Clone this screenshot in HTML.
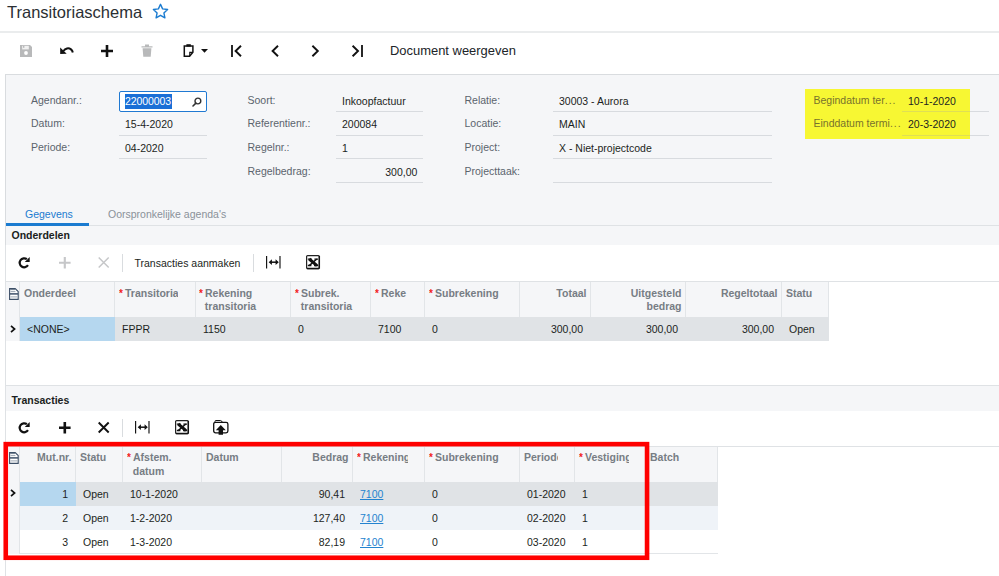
<!DOCTYPE html>
<html><head><meta charset="utf-8">
<style>
*{box-sizing:border-box;margin:0;padding:0}
html,body{width:999px;height:576px;overflow:hidden;background:#fff}
body{font-family:"Liberation Sans",sans-serif;font-size:10.5px;color:#1f2327;position:relative}
.a{position:absolute;white-space:nowrap}
.title{left:7px;top:0.9px;font-size:16.5px;color:#2b2f33;line-height:22px}
.lbl{color:#5b646d;line-height:14px}
.val{color:#1c1f22;line-height:14px}
.ul{height:1px;background:#d8dbdf}
.panel{background:#f5f6f8}
.gh{background:#f5f6f8;color:#777d84;font-weight:bold;line-height:13px;border-right:1px solid #e2e5e8;padding:5px 0 0 4px}
.gh span{display:block;overflow:hidden;height:28px}
.gh.r{text-align:right;padding-right:3.5px}
.gh i{color:#f21d1d;font-style:normal;font-weight:bold;font-size:10px;display:inline-block;width:6px}
.gc{line-height:22px;height:24px;overflow:hidden;padding-left:7px;color:#1c1f22}
.gc.r{text-align:right;padding-right:8px;padding-left:0}
.sec{font-weight:bold;color:#1b1e21;line-height:14px}
.tb{color:#1c1f22}
svg{position:absolute;overflow:visible}
</style></head><body>

<div class="a title">Transitoriaschema</div>
<svg style="left:152px;top:2.5px" width="17" height="16" viewBox="0 0 17 16"><path d="M8.5 1.3l2.1 4.6 5 .6-3.7 3.4 1 4.9-4.4-2.5-4.4 2.5 1-4.9L1.4 6.5l5-.6z" fill="none" stroke="#1a7bd0" stroke-width="1.4" stroke-linejoin="round"/></svg>
<div class="a" style="left:0;top:31px;width:999px;height:2px;background:#eaeced"></div>
<div class="a tb" style="left:390px;top:43px;font-size:12.95px;line-height:16px;color:#202428">Document weergeven</div>
<svg style="left:20px;top:45px" width="12" height="12" viewBox="0 0 12 12"><path d="M0 0h10l2 2v10h-12z" fill="#b8b9ba"/><rect x="2.2" y="0.8" width="6.6" height="3.6" fill="#fff" opacity=".8"/><rect x="3" y="0.8" width="1.4" height="2" fill="#b8b9ba"/><circle cx="6" cy="8" r="1.9" fill="#fff"/></svg>
<svg style="left:59px;top:45px" width="15" height="11" viewBox="0 0 15 11"><path d="M4.4 6C6.4 3.2 9.6 2.6 11.7 4.1c1.2 0.9 1.9 2 2.1 3.4" fill="none" stroke="#111" stroke-width="2"/><path d="M1.2 2.5V9l6.5-0.3z" fill="#111"/></svg>
<svg style="left:101px;top:45px" width="12" height="12" viewBox="0 0 12 12"><path d="M6 0v12M0 6h12" stroke="#111" stroke-width="2.6"/></svg>
<svg style="left:141px;top:44px" width="12" height="13" viewBox="0 0 12 13"><path d="M0.5 2.2h11v1.3h-11zM4 0.6h4v1.6h-4zM1.6 4.2h8.8l-0.7 8.6h-7.4z" fill="#b8b9ba"/></svg>
<svg style="left:182.5px;top:43px" width="12" height="14" viewBox="0 0 12 14"><path d="M1.3 3h8.6v6.2l-3.3 4.1H1.3z" fill="none" stroke="#111" stroke-width="1.5"/><path d="M3.4 1.2h4.4v2.4H3.4z" fill="#111"/><path d="M6.8 13V9.4h3" fill="none" stroke="#111" stroke-width="1.2"/></svg>
<svg style="left:201px;top:49px" width="7" height="4" viewBox="0 0 7 4"><path d="M0 0h7L3.5 3.8z" fill="#111"/></svg>
<svg style="left:231px;top:45px" width="11" height="12" viewBox="0 0 11 12"><path d="M1 0v12" stroke="#111" stroke-width="1.8"/><path d="M10 0.8L4.6 6l5.4 5.2" fill="none" stroke="#111" stroke-width="1.9"/></svg>
<svg style="left:271px;top:45px" width="8" height="12" viewBox="0 0 8 12"><path d="M7 0.8L1.6 6 7 11.2" fill="none" stroke="#111" stroke-width="1.9"/></svg>
<svg style="left:311px;top:45px" width="9" height="12" viewBox="0 0 9 12"><path d="M1.4 0.8L6.8 6l-5.4 5.2" fill="none" stroke="#111" stroke-width="1.9"/></svg>
<svg style="left:351px;top:45px" width="12" height="12" viewBox="0 0 12 12"><path d="M11 0v12" stroke="#111" stroke-width="1.8"/><path d="M1.6 0.8L7 6l-5.4 5.2" fill="none" stroke="#111" stroke-width="1.9"/></svg>
<div class="a" style="left:5px;top:74px;width:994px;height:1px;background:#d9dcdf"></div>
<div class="a panel" style="left:5px;top:75px;width:994px;height:151px;border-left:1px solid #d9dcdf"></div>
<div class="a lbl" style="left:31px;top:93px;">Agendanr.:</div>
<div class="a lbl" style="left:31px;top:116.2px;">Datum:</div>
<div class="a lbl" style="left:31px;top:139.9px;">Periode:</div>
<div class="a" style="left:119px;top:91px;width:88px;height:21px;border:1px solid #2079d2;border-radius:2px;background:#fff"></div>
<div class="a" style="left:125px;top:94px;width:47px;height:15px;background:#1a6fd6"></div>
<div class="a val" style="left:125px;top:94px;color:#fff;letter-spacing:-0.1px">22000003</div>
<svg style="left:191.5px;top:97px" width="10" height="10" viewBox="0 0 10 10"><circle cx="5.9" cy="4" r="2.9" fill="none" stroke="#333" stroke-width="1.4"/><path d="M3.9 6.1L1 9" stroke="#333" stroke-width="1.6" stroke-linecap="round"/></svg>
<div class="a val" style="left:125px;top:117.2px;">15-4-2020</div>
<div class="a val" style="left:125px;top:141.2px;">04-2020</div>
<div class="a ul" style="left:119px;top:135px;width:88px;"></div>
<div class="a ul" style="left:119px;top:158px;width:88px;"></div>
<div class="a lbl" style="left:247.5px;top:93px;">Soort:</div>
<div class="a lbl" style="left:247.5px;top:116.2px;">Referentienr.:</div>
<div class="a lbl" style="left:247.5px;top:139.9px;">Regelnr.:</div>
<div class="a lbl" style="left:247.5px;top:163.9px;">Regelbedrag:</div>
<div class="a val" style="left:342px;top:94px;">Inkoopfactuur</div>
<div class="a val" style="left:342px;top:117.2px;">200084</div>
<div class="a val" style="left:342px;top:141.2px;">1</div>
<div class="a val" style="left:336px;top:164.9px;width:81.4px;text-align:right">300,00</div>
<div class="a ul" style="left:336px;top:111px;width:87px;"></div>
<div class="a ul" style="left:336px;top:135px;width:87px;"></div>
<div class="a ul" style="left:336px;top:158px;width:87px;"></div>
<div class="a ul" style="left:336px;top:182px;width:87px;"></div>
<div class="a lbl" style="left:464.5px;top:93px;">Relatie:</div>
<div class="a lbl" style="left:464.5px;top:116.2px;">Locatie:</div>
<div class="a lbl" style="left:464.5px;top:139.9px;">Project:</div>
<div class="a lbl" style="left:464.5px;top:163.9px;">Projecttaak:</div>
<div class="a val" style="left:559px;top:94px;">30003 - Aurora</div>
<div class="a val" style="left:559px;top:117.2px;">MAIN</div>
<div class="a val" style="left:559px;top:141.2px;">X - Niet-projectcode</div>
<div class="a ul" style="left:553px;top:111px;width:219px;"></div>
<div class="a ul" style="left:553px;top:135px;width:219px;"></div>
<div class="a ul" style="left:553px;top:158px;width:219px;"></div>
<div class="a ul" style="left:553px;top:182px;width:219px;"></div>
<div class="a" style="left:805px;top:89px;width:165px;height:50px;background:#f7f733"></div>
<div class="a ul" style="left:902px;top:111px;width:68px;background:#dfdf55"></div>
<div class="a ul" style="left:970px;top:111px;width:19px;"></div>
<div class="a ul" style="left:902px;top:135px;width:68px;background:#dfdf55"></div>
<div class="a ul" style="left:970px;top:135px;width:19px;"></div>
<div class="a lbl" style="left:813.5px;top:93px;color:#77722c">Begindatum ter<span style="letter-spacing:1px">...</span></div>
<div class="a lbl" style="left:813.5px;top:116.2px;color:#77722c">Einddatum termi<span style="letter-spacing:1px">...</span></div>
<div class="a val" style="left:908px;top:94px;">10-1-2020</div>
<div class="a val" style="left:908px;top:117.2px;">20-3-2020</div>
<div class="a" style="left:6px;top:225px;width:993px;height:1px;background:#dfe2e5"></div>
<div class="a" style="left:25px;top:206.5px;color:#1a7bd0;line-height:14px">Gegevens</div>
<div class="a" style="left:108px;top:206.5px;color:#8a9199;line-height:14px">Oorspronkelijke agenda's</div>
<div class="a" style="left:6px;top:223px;width:83px;height:3px;background:#1a7bd0"></div>
<div class="a panel" style="left:5px;top:226px;width:994px;height:19px;border-left:1px solid #d9dcdf"></div>
<div class="a sec" style="left:11.5px;top:228.3px">Onderdelen</div>
<div class="a" style="left:5px;top:245px;width:1px;height:331px;background:#dfe2e5"></div>
<div class="a tb" style="left:134.5px;top:255.7px;line-height:14px">Transacties aanmaken</div>
<div class="a" style="left:122px;top:254px;width:1px;height:18px;background:#d9dcdf"></div>
<div class="a" style="left:253px;top:254px;width:1px;height:18px;background:#d9dcdf"></div>
<div class="a" style="left:6px;top:281px;width:993px;height:1px;background:#dfe2e5"></div>
<svg style="left:18.4px;top:256.4px" width="12.4" height="12.4" viewBox="0 0 12.4 12.4"><path d="M8.9 3.2A4.5 4.5 0 1 0 10 9.2" fill="none" stroke="#111" stroke-width="2.2"/><path d="M11.7 1v4.9H6.8z" fill="#111"/></svg>
<svg style="left:59px;top:257.3px" width="11.6" height="11.6" viewBox="0 0 12 12"><path d="M6 0v12M0 6h12" stroke="#c6c7c9" stroke-width="2.2"/></svg>
<svg style="left:98px;top:257.3px" width="11.4" height="11" viewBox="0 0 11 11"><path d="M0.5 0.5l10 10M10.5 0.5l-10 10" stroke="#c6c7c9" stroke-width="1.5"/></svg>
<svg style="left:265.8px;top:256.2px" width="14.6" height="12.4" viewBox="0 0 14.6 12.4"><path d="M0.6 0v12.4M14 0v12.4" stroke="#111" stroke-width="1.15"/><path d="M4.4 6.2h6.8" stroke="#111" stroke-width="1.5"/><path d="M2.7 6.2l3.2-2.9v5.8zM12.8 6.2l-3.2-2.9v5.8z" fill="#111"/></svg>
<svg style="left:305.6px;top:255.3px" width="14" height="14.2" viewBox="0 0 14 14.2"><rect x="0.6" y="0.6" width="12.8" height="13" rx="1" fill="#fff" stroke="#222" stroke-width="1.2"/><path d="M0.8 13.4h12.4M13.3 1v12.4" stroke="#111" stroke-width="1.5"/><path d="M3.2 4l7.8 6.6" stroke="#111" stroke-width="3"/><path d="M10.8 4L3.2 10.6" stroke="#111" stroke-width="1.5"/><path d="M1.8 4.1h4M8.4 4.1h3.6M1.8 10.5h3.6M8 10.5h4.2" stroke="#111" stroke-width="1.3"/></svg>
<div class="a gh" style="left:6px;top:282px;width:14px;height:35px;padding:0"></div>
<div class="a gh" style="left:20px;top:282px;width:95px;height:35px;"><span style="width:74px">Onderdeel</span></div>
<div class="a gh" style="left:115px;top:282px;width:81px;height:35px;"><span style="width:59px"><i>*</i>Transitoria</span></div>
<div class="a gh" style="left:196px;top:282px;width:95px;height:35px;padding-left:3px"><span style="width:74px"><i>*</i>Rekening<br>&nbsp;&nbsp;transitoria</span></div>
<div class="a gh" style="left:291px;top:282px;width:80px;height:35px;"><span style="width:59px"><i>*</i>Subrek.<br>&nbsp;&nbsp;transitoria</span></div>
<div class="a gh" style="left:371px;top:282px;width:54px;height:35px;"><span style="width:33px"><i>*</i>Reke</span></div>
<div class="a gh" style="left:425px;top:282px;width:95px;height:35px;"><span style="width:74px"><i>*</i>Subrekening</span></div>
<div class="a gh r" style="left:520px;top:282px;width:71px;height:35px;"><span style="width:62.5px">Totaal</span></div>
<div class="a gh r" style="left:591px;top:282px;width:95px;height:35px;"><span style="width:86.5px">Uitgesteld<br>bedrag</span></div>
<div class="a gh r" style="left:686px;top:282px;width:96px;height:35px;"><span style="width:87.5px">Regeltotaal</span></div>
<div class="a gh" style="left:782px;top:282px;width:47px;height:35px;"><span style="width:34px">Statu</span></div>
<div class="a" style="left:6px;top:317px;width:823px;height:24px;background:#e0e3e6"></div>
<div class="a" style="left:6px;top:317px;width:14px;height:24px;background:#f5f6f8;border-right:1px solid #e2e5e8"></div>
<div class="a" style="left:20px;top:317px;width:95px;height:24px;background:#b5d7ef"></div>
<div class="a gc" style="left:20px;top:317px;width:95px;line-height:24px;">&lt;NONE&gt;</div>
<div class="a gc" style="left:115px;top:317px;width:81px;line-height:24px;">FPPR</div>
<div class="a gc" style="left:196px;top:317px;width:95px;line-height:24px;">1150</div>
<div class="a gc" style="left:291px;top:317px;width:80px;line-height:24px;">0</div>
<div class="a gc" style="left:371px;top:317px;width:54px;line-height:24px;">7100</div>
<div class="a gc" style="left:425px;top:317px;width:95px;line-height:24px;">0</div>
<div class="a gc r" style="left:520px;top:317px;width:71px;line-height:24px;">300,00</div>
<div class="a gc r" style="left:591px;top:317px;width:95px;line-height:24px;">300,00</div>
<div class="a gc r" style="left:686px;top:317px;width:96px;line-height:24px;">300,00</div>
<div class="a gc" style="left:782px;top:317px;width:47px;line-height:24px;">Open</div>
<svg style="left:10px;top:325px" width="6" height="8" viewBox="0 0 6 8"><path d="M1 0.8L4.6 4 1 7.2" fill="none" stroke="#111" stroke-width="1.7"/></svg>
<svg style="left:9px;top:287.6px" width="10" height="12" viewBox="0 0 10 12"><path d="M0.6 0.6h5.6l3 3v7.8h-8.6z" fill="#fff" stroke="#3d5068" stroke-width="1.1"/><path d="M0.6 5.9h8.6" stroke="#3d5068" stroke-width="1.5"/><path d="M1.6 3.6h4.8M1.6 8.9h6.6" stroke="#3d5068" stroke-width="0.9" opacity=".55"/><path d="M1.2 1.5h5" stroke="#3d5068" stroke-width="1.2" opacity=".6"/></svg>
<div class="a" style="left:6px;top:385px;width:993px;height:1px;background:#dfe2e5"></div>
<div class="a panel" style="left:6px;top:386px;width:993px;height:25px"></div>
<div class="a sec" style="left:11.5px;top:393.1px">Transacties</div>
<div class="a" style="left:122px;top:419px;width:1px;height:18px;background:#d9dcdf"></div>
<div class="a" style="left:6px;top:446px;width:993px;height:1px;background:#dfe2e5"></div>
<svg style="left:18.4px;top:421.4px" width="12.4" height="12.4" viewBox="0 0 12.4 12.4"><path d="M8.9 3.2A4.5 4.5 0 1 0 10 9.2" fill="none" stroke="#111" stroke-width="2.2"/><path d="M11.7 1v4.9H6.8z" fill="#111"/></svg>
<svg style="left:59px;top:422.3px" width="11.6" height="11.6" viewBox="0 0 12 12"><path d="M6 0v12M0 6h12" stroke="#111" stroke-width="2.7"/></svg>
<svg style="left:98px;top:422.3px" width="11.4" height="11" viewBox="0 0 11 11"><path d="M0.5 0.5l10 10M10.5 0.5l-10 10" stroke="#111" stroke-width="1.9"/></svg>
<svg style="left:135.4px;top:420.8px" width="14.6" height="12.4" viewBox="0 0 14.6 12.4"><path d="M0.6 0v12.4M14 0v12.4" stroke="#111" stroke-width="1.15"/><path d="M4.4 6.2h6.8" stroke="#111" stroke-width="1.5"/><path d="M2.7 6.2l3.2-2.9v5.8zM12.8 6.2l-3.2-2.9v5.8z" fill="#111"/></svg>
<svg style="left:175.1px;top:420px" width="14" height="14.2" viewBox="0 0 14 14.2"><rect x="0.6" y="0.6" width="12.8" height="13" rx="1" fill="#fff" stroke="#222" stroke-width="1.2"/><path d="M0.8 13.4h12.4M13.3 1v12.4" stroke="#111" stroke-width="1.5"/><path d="M3.2 4l7.8 6.6" stroke="#111" stroke-width="3"/><path d="M10.8 4L3.2 10.6" stroke="#111" stroke-width="1.5"/><path d="M1.8 4.1h4M8.4 4.1h3.6M1.8 10.5h3.6M8 10.5h4.2" stroke="#111" stroke-width="1.3"/></svg>
<svg style="left:213px;top:420px" width="15.6" height="14.8" viewBox="0 0 15.6 14.8"><path d="M2 2.4V1.4q0-0.9 1-0.9h4.6q1 0 1.6 1.6" fill="none" stroke="#111" stroke-width="1"/><rect x="0.7" y="2.3" width="14.2" height="10.6" rx="1.8" fill="#fff" stroke="#111" stroke-width="1.3"/><path d="M7.8 5.1l5 5.1H10v4.5H5.6v-4.5H2.8z" fill="#111"/></svg>
<div class="a gh" style="left:6px;top:447px;width:14px;height:35px;padding:0"></div>
<div class="a gh r" style="left:20px;top:447px;width:56px;height:35px;padding-top:4.4px;line-height:12.4px"><span style="width:47.5px">Mut.nr.</span></div>
<div class="a gh" style="left:76px;top:447px;width:47px;height:35px;padding-top:4.4px;line-height:12.4px"><span style="width:34px">Statu</span></div>
<div class="a gh" style="left:123px;top:447px;width:79px;height:35px;padding-top:4.4px;line-height:12.4px"><span style="width:58px"><i>*</i>Afstem.<br>&nbsp;&nbsp;datum</span></div>
<div class="a gh" style="left:202px;top:447px;width:80px;height:35px;padding-top:4.4px;line-height:12.4px"><span style="width:59px">Datum</span></div>
<div class="a gh r" style="left:282px;top:447px;width:71px;height:35px;padding-top:4.4px;line-height:12.4px"><span style="width:62.5px">Bedrag</span></div>
<div class="a gh" style="left:353px;top:447px;width:72px;height:35px;padding-top:4.4px;line-height:12.4px"><span style="width:51px"><i>*</i>Rekening</span></div>
<div class="a gh" style="left:425px;top:447px;width:95px;height:35px;padding-top:4.4px;line-height:12.4px"><span style="width:74px"><i>*</i>Subrekening</span></div>
<div class="a gh" style="left:520px;top:447px;width:55px;height:35px;padding-top:4.4px;line-height:12.4px"><span style="width:34px">Periode</span></div>
<div class="a gh" style="left:575px;top:447px;width:71px;height:35px;padding-top:4.4px;line-height:12.4px"><span style="width:50px"><i>*</i>Vestiging</span></div>
<div class="a gh" style="left:646px;top:447px;width:72px;height:35px;padding-top:4.4px;line-height:12.4px"><span style="width:51px">Batch</span></div>
<div class="a" style="left:6px;top:482px;width:712px;height:24px;background:#e0e3e6"></div>
<div class="a" style="left:6px;top:506px;width:712px;height:24px;background:#eff3f8"></div>
<div class="a" style="left:6px;top:530px;width:712px;height:24px;background:#fff;border-bottom:1px solid #e2e5e8"></div>
<div class="a" style="left:6px;top:482px;width:14px;height:72px;background:#f5f6f8;border-right:1px solid #e2e5e8"></div>
<div class="a" style="left:20px;top:482px;width:56px;height:24px;background:#b5d7ef"></div>
<div class="a gc r" style="left:20px;top:482px;width:56px;line-height:25px;">1</div>
<div class="a gc" style="left:76px;top:482px;width:47px;line-height:25px;">Open</div>
<div class="a gc" style="left:123px;top:482px;width:79px;line-height:25px;">10-1-2020</div>
<div class="a gc r" style="left:282px;top:482px;width:71px;line-height:25px;">90,41</div>
<div class="a gc" style="left:353px;top:482px;width:72px;line-height:25px;color:#2483cf;text-decoration:underline">7100</div>
<div class="a gc" style="left:425px;top:482px;width:95px;line-height:25px;">0</div>
<div class="a gc" style="left:520px;top:482px;width:55px;line-height:25px;">01-2020</div>
<div class="a gc" style="left:575px;top:482px;width:71px;line-height:25px;">1</div>
<div class="a gc r" style="left:20px;top:506px;width:56px;line-height:25px;">2</div>
<div class="a gc" style="left:76px;top:506px;width:47px;line-height:25px;">Open</div>
<div class="a gc" style="left:123px;top:506px;width:79px;line-height:25px;">1-2-2020</div>
<div class="a gc r" style="left:282px;top:506px;width:71px;line-height:25px;">127,40</div>
<div class="a gc" style="left:353px;top:506px;width:72px;line-height:25px;color:#2483cf;text-decoration:underline">7100</div>
<div class="a gc" style="left:425px;top:506px;width:95px;line-height:25px;">0</div>
<div class="a gc" style="left:520px;top:506px;width:55px;line-height:25px;">02-2020</div>
<div class="a gc" style="left:575px;top:506px;width:71px;line-height:25px;">1</div>
<div class="a gc r" style="left:20px;top:530px;width:56px;line-height:25px;">3</div>
<div class="a gc" style="left:76px;top:530px;width:47px;line-height:25px;">Open</div>
<div class="a gc" style="left:123px;top:530px;width:79px;line-height:25px;">1-3-2020</div>
<div class="a gc r" style="left:282px;top:530px;width:71px;line-height:25px;">82,19</div>
<div class="a gc" style="left:353px;top:530px;width:72px;line-height:25px;color:#2483cf;text-decoration:underline">7100</div>
<div class="a gc" style="left:425px;top:530px;width:95px;line-height:25px;">0</div>
<div class="a gc" style="left:520px;top:530px;width:55px;line-height:25px;">03-2020</div>
<div class="a gc" style="left:575px;top:530px;width:71px;line-height:25px;">1</div>
<svg style="left:10px;top:489px" width="6" height="8" viewBox="0 0 6 8"><path d="M1 0.8L4.6 4 1 7.2" fill="none" stroke="#111" stroke-width="1.7"/></svg>
<svg style="left:9px;top:452.2px" width="10" height="12" viewBox="0 0 10 12"><path d="M0.6 0.6h5.6l3 3v7.8h-8.6z" fill="#fff" stroke="#3d5068" stroke-width="1.1"/><path d="M0.6 5.9h8.6" stroke="#3d5068" stroke-width="1.5"/><path d="M1.6 3.6h4.8M1.6 8.9h6.6" stroke="#3d5068" stroke-width="0.9" opacity=".55"/><path d="M1.2 1.5h5" stroke="#3d5068" stroke-width="1.2" opacity=".6"/></svg>
<svg style="left:0;top:0" width="999" height="576" viewBox="0 0 999 576"><rect x="5.75" y="444.15" width="641.3" height="113.6" fill="none" stroke="#ff0000" stroke-width="4.6"/></svg>
</body></html>
